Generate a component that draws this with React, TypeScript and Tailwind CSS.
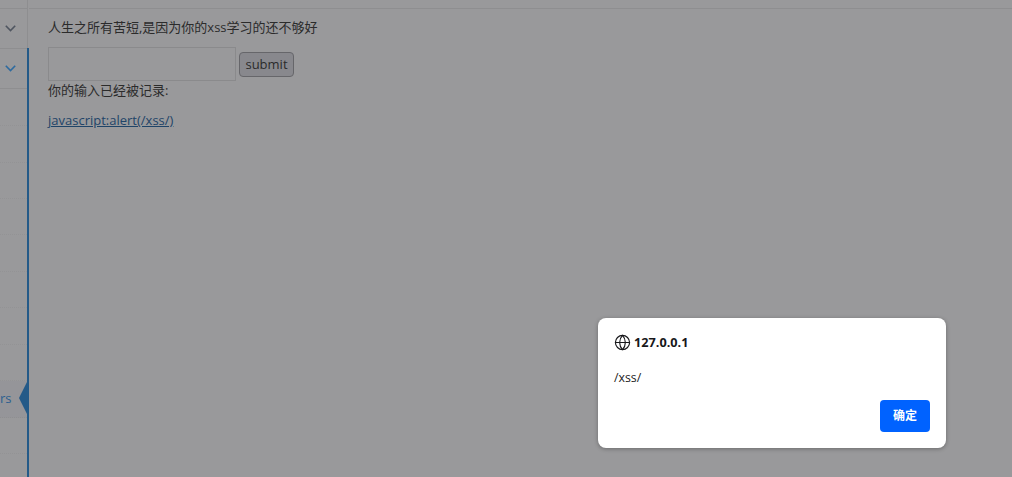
import { Globe } from 'lucide-react';

function Chevron({ color }: { color: string }) {
  return (
    <svg width="11" height="7" viewBox="0 0 11 7" fill="none" stroke={color} strokeWidth="1.6">
      <path d="M0.8 0.8 L5.5 5.5 L10.2 0.8" />
    </svg>
  );
}

function Sidebar() {
  const rowHeights = ['h-[37px]', 'h-[37px]', 'h-[36px]', 'h-[36px]', 'h-[37px]', 'h-[36px]', 'h-[37px]', 'h-[36px]'];

  return (
    <div className="flex w-[27px] shrink-0 flex-col">
      <div className="h-[9px] border-b border-[#8e8e90]" />
      <div className="flex h-[39px] items-center justify-end pr-[11px]">
        <Chevron color="#4f5560" />
      </div>
      <div className="flex h-[41px] items-center justify-end border-t border-b border-[#8e8e90] pr-[11px]">
        <Chevron color="#2d6a9f" />
      </div>
      {rowHeights.map((height, index) => (
        <div key={index} className={`${height} border-b border-dotted border-[#939395]`} />
      ))}
      <div className="flex h-[37px] items-center border-b border-dotted border-[#8f8f91] bg-[#959599]">
        <span className="font-['Open_Sans',sans-serif] text-[13px] text-[#2b5f90]">rs</span>
      </div>
      <div className="h-[36px] border-b border-dotted border-[#939395]" />
    </div>
  );
}

function Content() {
  return (
    <div className="relative flex-1 border-l-2 border-[#245a88] font-['Open_Sans','Noto_Sans_CJK_SC',sans-serif]">
      {/* top of the divider is a thin grey line, the blue starts at the open menu */}
      <div className="absolute top-0 left-[-2px] h-[48px] w-[2px] border-l border-[#8e8e90] bg-[#99999b]" />
      <div className="h-[9px] border-b border-[#8e8e90]" />
      <div className="pt-[9px] pl-[19px] text-[13px] leading-[18px] text-[#2b2b2b]">
        <p>人生之所有苦短,是因为你的xss学习的还不够好</p>
        <div className="mt-[11px] flex items-center gap-[3px]">
          <input className="h-[34px] w-[188px] border border-[#8a8a8c]" />
          <button className="h-[25px] w-[55px] rounded-[4px] border border-[#66666a] bg-[#88888d] text-[13px] text-[#2b2b2b]">
            submit
          </button>
        </div>
        <p>你的输入已经被记录:</p>
        <a className="mt-[12px] block text-[#1f4468] underline">javascript:alert(/xss/)</a>
      </div>
    </div>
  );
}

function AlertDialog() {
  return (
    <div className="absolute top-[318px] left-[598px] flex h-[130px] w-[348px] flex-col rounded-[8px] bg-white px-4 pt-[15px] pb-4 font-['Open_Sans','Noto_Sans_CJK_SC',sans-serif] shadow-[0_1px_4px_rgba(0,0,0,0.3)]">
      <div className="flex items-center gap-[3px] text-[12.7px] font-bold text-[#17171a]">
        <Globe size={17} strokeWidth={1.6} />
        <span>127.0.0.1</span>
      </div>
      <p className="mt-[18px] text-[12.3px] leading-[16px] text-[#222]">/xss/</p>
      <div className="mt-auto flex justify-end">
        <button className="h-8 w-[50px] rounded-[4px] bg-[#0062ff] text-[12px] font-semibold text-white">确定</button>
      </div>
    </div>
  );
}

export default function App() {
  return (
    <div className="relative flex h-[477px] w-full overflow-hidden bg-[#99999b]">
      <Sidebar />
      <Content />
      {/* blue notch pointing out of the active menu row */}
      <svg className="absolute top-[382px] left-[19px]" width="10" height="32" viewBox="0 0 10 32">
        <path d="M0 16 L8 0 H10 V32 H8 Z" fill="#245a88" />
      </svg>
      <AlertDialog />
    </div>
  );
}
